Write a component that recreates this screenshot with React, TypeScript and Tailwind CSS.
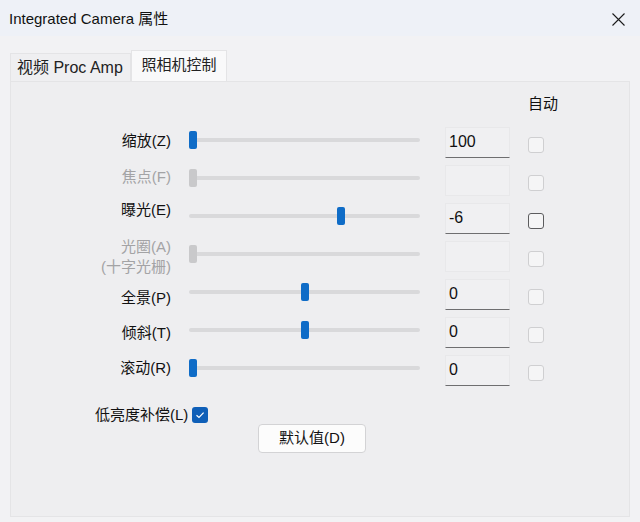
import React from 'react';

type Row = {
  label: string[];
  disabled?: boolean;
  thumb: string;
  value?: string;
  labelShift?: string;
  focus?: boolean;
};

const rows: Row[] = [
  { label: ['缩放(Z)'], thumb: 'left-0', value: '100', labelShift: 'mt-[2px]' },
  { label: ['焦点(F)'], thumb: 'left-0', disabled: true, labelShift: 'mb-[2px]' },
  { label: ['曝光(E)'], thumb: 'left-[148px]', value: '-6', labelShift: 'mb-[12px]', focus: true },
  { label: ['光圈(A)', '(十字光栅)'], thumb: 'left-0', disabled: true, labelShift: 'mt-[6px]' },
  { label: ['全景(P)'], thumb: 'left-[112px]', value: '0', labelShift: 'mt-[12px]' },
  { label: ['倾斜(T)'], thumb: 'left-[112px]', value: '0', labelShift: 'mt-[6px]' },
  { label: ['滚动(R)'], thumb: 'left-0', value: '0' },
];

const Slider = ({ thumb, disabled }: { thumb: string; disabled?: boolean }) => (
  <div className="relative w-[231px] h-[18px] flex items-center">
    <div className="w-full h-[4px] rounded-full bg-[#d9d9db]" />
    <div
      className={`absolute top-0 ${thumb} w-[8px] h-[18px] rounded-[2px] ${
        disabled ? 'bg-[#c9c9cb]' : 'bg-[#0f6cc7]'
      }`}
    />
  </div>
);

export default function App() {
  return (
    <div className="w-[640px] h-[522px] flex flex-col bg-[#f2f2f4] text-[#111111] font-['Liberation_Sans','Noto_Sans_CJK_SC',sans-serif] overflow-hidden">
      <div className="h-[36px] flex items-center justify-between pl-[9px] pr-[14px] bg-[#eef1f7] pt-[2px]">
        <span className="text-[15px] leading-[22px]">Integrated Camera 属性</span>
        <svg width="13" height="13" viewBox="0 0 13 13" className="mr-[1px]">
          <path d="M0.5 0.5 L12.5 12.5 M12.5 0.5 L0.5 12.5" stroke="#1b1b1b" strokeWidth="1.1" />
        </svg>
      </div>

      <div className="flex items-end pl-[10px] mt-[14px]">
        <div className="w-[121px] h-[28px] flex items-center pl-[6px] border border-b-0 border-[#e4e4e6] bg-[#efeff1] text-[16px] text-[#222222]">
          视频 Proc Amp
        </div>
        <div className="w-[96px] h-[31px] flex items-center justify-center border border-b-0 border-[#e4e4e6] bg-[#f9f9fa] text-[15px] text-[#222222] pb-[2px]">
          照相机控制
        </div>
      </div>

      <div className="mx-[10px] h-[436px] border border-[#e4e4e6] bg-[#eeeef0] flex flex-col">
        <div className="h-[39px] pt-[11px] flex">
          <span className="ml-[517px] text-[15px] leading-[22px]">自动</span>
        </div>

        {rows.map((r, i) => (
          <div key={i} className="h-[38px] flex items-center">
            <div
              className={`w-[160px] text-right text-[15px] leading-[20px] ${r.labelShift ?? ''} ${
                r.disabled ? 'text-[#a3a3a5]' : 'text-[#111111]'
              }`}
            >
              {r.label.map((l) => (
                <div key={l}>{l}</div>
              ))}
            </div>
            <div className="ml-[18px]">
              <Slider thumb={r.thumb} disabled={r.disabled} />
            </div>
            <div
              className={`ml-[25px] mt-[5px] w-[65px] h-[31px] pl-[3px] pt-[3px] text-[16px] leading-[22px] bg-[#f0f0f2] border border-[#e8e8ea] ${
                r.value !== undefined ? 'border-b-[1.5px] border-b-[#6e6e70]' : ''
              }`}
            >
              {r.value}
            </div>
            <div
              className={`ml-[18px] mt-[9px] w-[16px] h-[16px] rounded-[3px] border bg-[#f5f5f6] ${
                r.focus ? 'border-[#5c5c5e]' : 'border-[#cfcfd1]'
              }`}
            />
          </div>
        ))}

        <div className="h-[20px] mt-[18px] flex items-center pl-[84px]">
          <span className="text-[15px] leading-[20px]">低亮度补偿(L)</span>
          <div className="ml-[4px] w-[16px] h-[16px] rounded-[3px] bg-[#0f5fb8] flex items-center justify-center">
            <svg width="10" height="10" viewBox="0 0 10 10">
              <path d="M1.5 5.2 L4 7.5 L8.6 2.6" fill="none" stroke="#ffffff" strokeWidth="1.2" />
            </svg>
          </div>
        </div>

        <div className="ml-[247px] mt-[-1px] w-[108px] h-[29px] flex items-center justify-center rounded-[4px] border border-[#d3d3d5] bg-[#fcfcfc] text-[15px]">
          默认值(D)
        </div>
      </div>
    </div>
  );
}
